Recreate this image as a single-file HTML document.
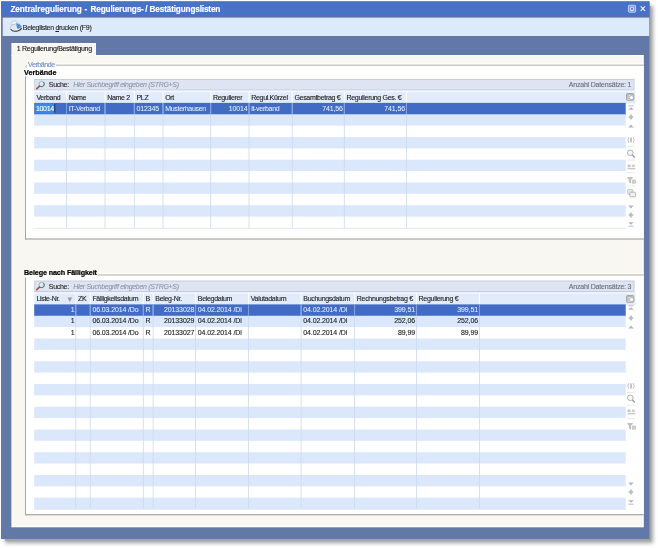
<!DOCTYPE html><html><head><meta charset="utf-8"><style>
html,body{margin:0;padding:0;background:#fff;width:658px;height:548px;overflow:hidden;position:relative}
div{position:absolute;box-sizing:border-box}
.q{left:0;top:0;width:100px;height:100px;transform-origin:0 0}
.t{font-family:"Liberation Sans",sans-serif;font-size:7px;line-height:8px;letter-spacing:-0.3px;color:#1e1e1e;white-space:nowrap;-webkit-text-stroke:0.12px currentColor}
.b{font-family:"Liberation Sans",sans-serif;font-size:7.2px;line-height:8px;font-weight:bold;color:#000;white-space:nowrap;-webkit-text-stroke:0.2px #000}
svg{position:absolute;overflow:visible}
</style></head><body><div style="left:0;top:0;width:658px;height:548px;filter:blur(0.4px)">
<div style="left:5px;top:6px;width:646px;height:535px;box-shadow:1px 1px 4px 1px rgba(0,0,0,0.38);background:#a6a6a6"></div>
<div class="q" style="transform:translate(1px,1.4px) scale(6.48500,5.37600);background:#6278a6"></div>
<div class="q" style="transform:translate(1px,1.4px) scale(6.48500,0.14400);background:#4772c6"></div>
<div class="q" style="transform:translate(1px,15.8px) scale(6.48500,0.01800);background:#5870ad"></div>
<div style="left:10.4px;top:4.9px;font-family:'Liberation Sans',sans-serif;font-weight:bold;font-size:8.2px;line-height:10px;color:#fff;white-space:nowrap;-webkit-text-stroke:0.15px #fff;letter-spacing:-0.05px">Zentralregulierung</div>
<div style="left:84.6px;top:4.9px;font-family:'Liberation Sans',sans-serif;font-weight:bold;font-size:8.2px;line-height:10px;color:#fff;white-space:nowrap;-webkit-text-stroke:0.15px #fff;">-</div>
<div style="left:90.6px;top:4.9px;font-family:'Liberation Sans',sans-serif;font-weight:bold;font-size:8.2px;line-height:10px;color:#fff;white-space:nowrap;-webkit-text-stroke:0.15px #fff;letter-spacing:-0.15px">Regulierungs-</div>
<div style="left:145.2px;top:4.9px;font-family:'Liberation Sans',sans-serif;font-weight:bold;font-size:8.2px;line-height:10px;color:#fff;white-space:nowrap;-webkit-text-stroke:0.15px #fff;">/</div>
<div style="left:149.6px;top:4.9px;font-family:'Liberation Sans',sans-serif;font-weight:bold;font-size:8.2px;line-height:10px;color:#fff;white-space:nowrap;-webkit-text-stroke:0.15px #fff;letter-spacing:-0.15px">Bestätigungslisten</div>
<svg style="left:0;top:0" width="658" height="20">
<rect x="628.4" y="5.3" width="7.2" height="6.9" rx="0.8" fill="#7f9cdc" stroke="#c8d5f3" stroke-width="0.9"/>
<rect x="630.3" y="7.2" width="3.4" height="3.2" rx="1.3" fill="#6a8ad0" stroke="#e8eefa" stroke-width="0.9"/>
<path d="M630.6 10.6 H633.4" stroke="#dfe7f8" stroke-width="0.8"/>
<path d="M640.7 6.3 L645.0 10.9 M645.0 6.3 L640.7 10.9" stroke="#eef3fc" stroke-width="1.15"/>
</svg>
<div class="q" style="transform:translate(2.7px,17.6px) scale(6.46500,0.18400);background:#dcebfc"></div>
<svg style="left:0;top:0" width="40" height="40">
<path d="M10.2 28.6 C10.6 25.6 13 23.6 16.5 23.4 C19 23.3 21 24.6 21.6 27.4 C21.8 29.2 19 30.8 15.6 31.4 C12.8 31.8 10.4 30.6 10.2 28.6 Z" fill="#e4e8ec" stroke="#a9b1ba" stroke-width="0.6"/>
<path d="M11.2 24.6 C11.2 22.4 12.2 21.2 13.6 21.1 L15.8 21.1 C16.6 21.2 16.9 22.4 16.8 23.6 L11.6 24.8 Z" fill="#f2f7fb" stroke="#9fb0c0" stroke-width="0.6"/>
<path d="M16.2 23.5 C18.4 23.6 20.4 24.4 21.2 26.6 C21.3 27.8 19.6 28.6 17.4 28.8 C16.6 27 16.2 25.2 16.2 23.5 Z" fill="#4b8fdb"/>
<path d="M10.8 29.2 C12.2 31.2 15 31.6 17.6 31 C19.6 30.4 21.2 29.4 21.6 28" fill="none" stroke="#3f3f3f" stroke-width="1.1"/>
</svg>
<div class="t" style="left:22.8px;top:23.8px;">Beleglisten <u style="text-decoration-thickness:0.5px">d</u>rucken (F9)</div>
<div class="q" style="transform:translate(11.4px,43px) scale(0.84600,0.13000);background:#fff"></div>
<div class="q" style="transform:translate(12.4px,44px) scale(0.82600,0.12000);background:#f8f7f2"></div>
<div class="t" style="left:16.8px;top:45.3px;color:#161616">1 Regulierung/Bestätigung</div>
<div class="q" style="transform:translate(11.4px,55.0px) scale(6.32400,4.72300);background:#fff"></div>
<div class="q" style="transform:translate(12.4px,56.0px) scale(6.29900,4.69800);background:#f8f7f2"></div>
<div class="q" style="transform:translate(12.4px,54.0px) scale(0.82600,0.02500);background:#f8f7f2"></div>
<div class="q" style="transform:translate(25.5px,65.2px) scale(6.18300,1.73800);background:#fff"></div>
<div class="q" style="transform:translate(56px,63.0px) scale(5.87800,0.01300);background:#fdfdf8"></div>
<div class="q" style="transform:translate(56px,64.7px) scale(5.87800,0.01000);background:#b2afa8"></div>
<div class="q" style="transform:translate(25.0px,76.3px) scale(0.01000,1.63300);background:#aaa69f"></div>
<div class="q" style="transform:translate(25.0px,238.4px) scale(6.18800,0.01200);background:#aca79f"></div>
<div class="t" style="left:28px;top:60.6px;color:#6f88c6;letter-spacing:-0.4px;-webkit-text-stroke:0.1px #6f88c6">Verbände</div>
<svg style="left:0;top:0" width="40" height="80"><path d="M26 68 V65.6 H27.2" fill="none" stroke="#a0a0a0" stroke-width="0.6"/></svg>
<div class="b" style="left:24.1px;top:68.5px;">Verbände</div>
<div class="q" style="transform:translate(25.5px,275.0px) scale(6.18300,2.39700);background:#fff"></div>
<div class="q" style="transform:translate(97.5px,272.8px) scale(5.46300,0.01300);background:#fdfdf8"></div>
<div class="q" style="transform:translate(97.5px,274.5px) scale(5.46300,0.01000);background:#b2afa8"></div>
<div class="q" style="transform:translate(25.0px,277.5px) scale(0.01000,2.37800);background:#aaa69f"></div>
<div class="q" style="transform:translate(25.0px,514.1px) scale(6.18800,0.01200);background:#aca79f"></div>
<div class="b" style="left:24.0px;top:269.3px;letter-spacing:-0.12px">Belege nach Fälligkeit</div>
<div class="q" style="transform:translate(34.2px,79.0px) scale(6.00400,0.11500);background:#c4cde2"></div>
<div class="q" style="transform:translate(35.2px,80.0px) scale(5.98400,0.09500);background:#dfe4f2"></div>
<svg style="left:35.3px;top:80.8px" width="12" height="10">
<circle cx="6.7" cy="3.0" r="2.7" fill="#d2f0f6" stroke="#8fa8ac" stroke-width="0.8"/>
<path d="M8.6 1.2 A2.7 2.7 0 0 1 5.2 5.3" fill="none" stroke="#55625f" stroke-width="0.9"/>
<path d="M4.4 5.2 L1.8 7.6" stroke="#93503e" stroke-width="1.7" stroke-linecap="round"/>
<path d="M3.2 5.6 L1.2 7.0" stroke="#f0c890" stroke-width="0.6" stroke-linecap="round" opacity="0.6"/>
</svg>
<div class="t" style="left:48.8px;top:81.0px;color:#2a2a2a">Suche:</div>
<div class="t" style="left:73.2px;top:81.0px;font-style:italic;color:#8a91a4;letter-spacing:-0.3px;-webkit-text-stroke:0.05px #8a91a4">Hier Suchbegriff eingeben (STRG+S)</div>
<div class="t" style="right:26.70px;top:81.0px;color:#6c7078;letter-spacing:-0.2px">Anzahl Datensätze: 1</div>
<div class="q" style="transform:translate(34.2px,90.5px) scale(6.01200,0.13100);background:#e1ebf9"></div>
<div class="q" style="transform:translate(34.2px,91.1px) scale(6.01200,0.01100);background:#f6f9fe"></div>
<svg style="left:626.3px;top:93.1px" width="10" height="9">
<rect x="0.5" y="0.5" width="7.2" height="6.8" rx="0.9" fill="#f2f2f2" stroke="#8e8e8e" stroke-width="0.75"/>
<path d="M0.9 0.9 H2.8 V6.9 H0.9 Z" fill="#c4c4c4"/>
<path d="M0.9 0.9 H7.3 V2.1 H0.9 Z" fill="#b8b8b8"/>
<ellipse cx="5.6" cy="4.6" rx="2.4" ry="1.9" fill="#ffffff" stroke="#7c7c7c" stroke-width="0.55"/>
</svg>
<div class="q" style="transform:translate(66.0px,91.0px) scale(0.01100,0.11900);background:#fbfdff"></div>
<div class="q" style="transform:translate(104.5px,91.0px) scale(0.01100,0.11900);background:#fbfdff"></div>
<div class="q" style="transform:translate(133.8px,91.0px) scale(0.01100,0.11900);background:#fbfdff"></div>
<div class="q" style="transform:translate(162.5px,91.0px) scale(0.01100,0.11900);background:#fbfdff"></div>
<div class="q" style="transform:translate(210.2px,91.0px) scale(0.01100,0.11900);background:#fbfdff"></div>
<div class="q" style="transform:translate(248.5px,91.0px) scale(0.01100,0.11900);background:#fbfdff"></div>
<div class="q" style="transform:translate(291.7px,91.0px) scale(0.01100,0.11900);background:#fbfdff"></div>
<div class="q" style="transform:translate(343.8px,91.0px) scale(0.01100,0.11900);background:#fbfdff"></div>
<div class="q" style="transform:translate(405.9px,91.0px) scale(0.01100,0.11900);background:#fbfdff"></div>
<div class="t" style="left:36.400000000000006px;top:93.5px;color:#222">Verband</div>
<div class="t" style="left:68.7px;top:93.5px;color:#222">Name</div>
<div class="t" style="left:107.2px;top:93.5px;color:#222">Name 2</div>
<div class="t" style="left:136.5px;top:93.5px;color:#222">PLZ</div>
<div class="t" style="left:165.2px;top:93.5px;color:#222">Ort</div>
<div class="t" style="left:212.89999999999998px;top:93.5px;color:#222">Regulierer</div>
<div class="t" style="left:251.2px;top:93.5px;color:#222">Regul.Kürzel</div>
<div class="t" style="left:294.4px;top:93.5px;color:#222">Gesamtbetrag €</div>
<div class="t" style="left:346.5px;top:93.5px;color:#222">Regulierung Ges. €</div>
<div class="t" style="left:408.59999999999997px;top:93.5px;color:#222"></div>
<div class="q" style="transform:translate(34.2px,102.9px) scale(5.91500,0.12070);background:#416bc4"></div>
<div class="q" style="transform:translate(34.2px,114.27000000000001px) scale(5.91500,0.12070);background:#dbe8fb"></div>
<div class="q" style="transform:translate(34.2px,125.64px) scale(5.91500,0.12070);background:#ffffff"></div>
<div class="q" style="transform:translate(34.2px,137.01px) scale(5.91500,0.12070);background:#dbe8fb"></div>
<div class="q" style="transform:translate(34.2px,148.38px) scale(5.91500,0.12070);background:#ffffff"></div>
<div class="q" style="transform:translate(34.2px,159.75px) scale(5.91500,0.12070);background:#dbe8fb"></div>
<div class="q" style="transform:translate(34.2px,171.12px) scale(5.91500,0.12070);background:#ffffff"></div>
<div class="q" style="transform:translate(34.2px,182.49px) scale(5.91500,0.12070);background:#dbe8fb"></div>
<div class="q" style="transform:translate(34.2px,193.86px) scale(5.91500,0.12070);background:#ffffff"></div>
<div class="q" style="transform:translate(34.2px,205.23000000000002px) scale(5.91500,0.12070);background:#dbe8fb"></div>
<div class="q" style="transform:translate(34.2px,216.6px) scale(5.91500,0.11370);background:#ffffff"></div>
<div class="q" style="transform:translate(34.2px,227.77px) scale(5.91500,0.01000);background:#e2e8f2"></div>
<div class="q" style="transform:translate(66.1px,102.9px) scale(0.00800,1.25070);background:#cbd9ef"></div>
<div class="q" style="transform:translate(66.0px,102.9px) scale(0.01000,0.11370);background:#7f9ddb"></div>
<div class="q" style="transform:translate(104.6px,102.9px) scale(0.00800,1.25070);background:#cbd9ef"></div>
<div class="q" style="transform:translate(104.5px,102.9px) scale(0.01000,0.11370);background:#7f9ddb"></div>
<div class="q" style="transform:translate(133.9px,102.9px) scale(0.00800,1.25070);background:#cbd9ef"></div>
<div class="q" style="transform:translate(133.8px,102.9px) scale(0.01000,0.11370);background:#7f9ddb"></div>
<div class="q" style="transform:translate(162.6px,102.9px) scale(0.00800,1.25070);background:#cbd9ef"></div>
<div class="q" style="transform:translate(162.5px,102.9px) scale(0.01000,0.11370);background:#7f9ddb"></div>
<div class="q" style="transform:translate(210.29999999999998px,102.9px) scale(0.00800,1.25070);background:#cbd9ef"></div>
<div class="q" style="transform:translate(210.2px,102.9px) scale(0.01000,0.11370);background:#7f9ddb"></div>
<div class="q" style="transform:translate(248.6px,102.9px) scale(0.00800,1.25070);background:#cbd9ef"></div>
<div class="q" style="transform:translate(248.5px,102.9px) scale(0.01000,0.11370);background:#7f9ddb"></div>
<div class="q" style="transform:translate(291.8px,102.9px) scale(0.00800,1.25070);background:#cbd9ef"></div>
<div class="q" style="transform:translate(291.7px,102.9px) scale(0.01000,0.11370);background:#7f9ddb"></div>
<div class="q" style="transform:translate(343.90000000000003px,102.9px) scale(0.00800,1.25070);background:#cbd9ef"></div>
<div class="q" style="transform:translate(343.8px,102.9px) scale(0.01000,0.11370);background:#7f9ddb"></div>
<div class="q" style="transform:translate(406.0px,102.9px) scale(0.00800,1.25070);background:#cbd9ef"></div>
<div class="q" style="transform:translate(405.9px,102.9px) scale(0.01000,0.11370);background:#7f9ddb"></div>
<div class="t" style="left:68.7px;top:104.5px;color:#e6eeff;-webkit-text-stroke:0.05px #e6eeff">IT-Verband</div>
<div class="t" style="left:136.5px;top:104.5px;letter-spacing:-0.12px;color:#e6eeff;-webkit-text-stroke:0.05px #e6eeff">012345</div>
<div class="t" style="left:165.2px;top:104.5px;color:#e6eeff;-webkit-text-stroke:0.05px #e6eeff">Musterhausen</div>
<div class="t" style="right:410.40px;top:104.5px;letter-spacing:-0.12px;color:#e6eeff;-webkit-text-stroke:0.05px #e6eeff">10014</div>
<div class="t" style="left:251.2px;top:104.5px;color:#e6eeff;-webkit-text-stroke:0.05px #e6eeff">it-verband</div>
<div class="t" style="right:315.10px;top:104.5px;letter-spacing:-0.12px;color:#e6eeff;-webkit-text-stroke:0.05px #e6eeff">741,56</div>
<div class="t" style="right:253.00px;top:104.5px;letter-spacing:-0.12px;color:#e6eeff;-webkit-text-stroke:0.05px #e6eeff">741,56</div>
<svg style="left:627px;top:105px" width="8" height="6"><path d="M1.4 0.8 H6.6" stroke="#b4b4b4" stroke-width="0.9"/><path d="M1.2 4.8 L4 2.2 L6.8 4.8 Z" fill="#b4b4b4"/></svg>
<svg style="left:627px;top:113px" width="8" height="8"><path d="M4 1.3 L6.4 4 L4 6.7 L1.6 4 Z" fill="#c4c4c4"/><path d="M1.4 4 H6.6 M4 1.2 V6.8" stroke="#b4b4b4" stroke-width="0.5"/></svg>
<svg style="left:627px;top:123px" width="8" height="6"><path d="M1.2 4.4 L4 1.6 L6.8 4.4 Z" fill="#b6b6b6"/></svg>
<svg style="left:627px;top:137px" width="8" height="6">
<path d="M1.8 0.2 Q-0.2 3 1.8 5.8 M6.2 0.2 Q8.2 3 6.2 5.8" fill="none" stroke="#a4a4a4" stroke-width="0.7"/>
<path d="M4 0.4 V5.6" stroke="#959595" stroke-width="1.1"/>
</svg>
<div class="q" style="transform:translate(627px,146.39999999999998px) scale(0.08000,0.00700);background:#e0e0e0"></div>
<svg style="left:626px;top:149.3px" width="11" height="10">
<circle cx="4.3" cy="3.8" r="2.8" fill="#f6f6f6" stroke="#aaaaaa" stroke-width="0.9"/>
<path d="M6.3 5.9 L8.9 8.4" stroke="#9c9c9c" stroke-width="1.4"/>
</svg>
<div class="q" style="transform:translate(627px,159.7px) scale(0.08000,0.00700);background:#e0e0e0"></div>
<svg style="left:626.5px;top:163.5px" width="10" height="7">
<rect x="0.6" y="0.6" width="3" height="2.6" fill="#c4c4c4"/><rect x="4.8" y="0.6" width="3" height="2.6" fill="#cfcfcf"/>
<path d="M0.6 4.8 H8.4" stroke="#b4b4b4" stroke-width="1.0"/>
</svg>
<div class="q" style="transform:translate(627px,172.39999999999998px) scale(0.08000,0.00700);background:#e0e0e0"></div>
<svg style="left:626.5px;top:177.2px" width="10" height="7">
<path d="M0.5 0.6 H5.6 L3.6 2.8 V6 L2.4 5.4 V2.8 Z" fill="#c8c8c8" stroke="#a4a4a4" stroke-width="0.6"/>
<rect x="5.2" y="3.0" width="3.4" height="3.2" fill="#d2d2d2" stroke="#b4b4b4" stroke-width="0.5"/>
</svg>
<div class="q" style="transform:translate(627px,185.7px) scale(0.08000,0.00700);background:#e0e0e0"></div>
<svg style="left:626.5px;top:189px" width="10" height="9">
<rect x="0.6" y="0.6" width="5.2" height="4.8" rx="0.6" fill="#e9e9e9" stroke="#b4b4b4" stroke-width="0.7"/>
<rect x="2.8" y="3.2" width="5.8" height="4.6" rx="0.8" fill="#f0f0f0" stroke="#9e9e9e" stroke-width="0.7"/>
</svg>
<svg style="left:627px;top:203.8px" width="8" height="6"><path d="M1.2 1.6 L4 4.4 L6.8 1.6 Z" fill="#b6b6b6"/></svg>
<svg style="left:627px;top:211px" width="8" height="8"><path d="M4 1.3 L6.4 4 L4 6.7 L1.6 4 Z" fill="#c4c4c4"/><path d="M1.4 4 H6.6 M4 1.2 V6.8" stroke="#b4b4b4" stroke-width="0.5"/></svg>
<svg style="left:627px;top:221.2px" width="8" height="6"><path d="M1.4 5.2 H6.6" stroke="#b4b4b4" stroke-width="0.9"/><path d="M1.2 1.2 L4 3.8 L6.8 1.2 Z" fill="#b4b4b4"/></svg>
<div class="q" style="transform:translate(35.1px,103.2px) scale(0.18900,0.10300);background:#3a88e8"></div>
<div class="t" style="left:36.0px;top:104.5px;letter-spacing:-0.12px;color:#fff;letter-spacing:-0.35px">10014</div>
<div class="q" style="transform:translate(54.3px,104.2px) scale(0.01000,0.08400);background:#2a3550"></div>
<div class="q" style="transform:translate(34.2px,280.5px) scale(6.00400,0.11500);background:#c4cde2"></div>
<div class="q" style="transform:translate(35.2px,281.5px) scale(5.98400,0.09500);background:#dfe4f2"></div>
<svg style="left:35.3px;top:282.3px" width="12" height="10">
<circle cx="6.7" cy="3.0" r="2.7" fill="#d2f0f6" stroke="#8fa8ac" stroke-width="0.8"/>
<path d="M8.6 1.2 A2.7 2.7 0 0 1 5.2 5.3" fill="none" stroke="#55625f" stroke-width="0.9"/>
<path d="M4.4 5.2 L1.8 7.6" stroke="#93503e" stroke-width="1.7" stroke-linecap="round"/>
<path d="M3.2 5.6 L1.2 7.0" stroke="#f0c890" stroke-width="0.6" stroke-linecap="round" opacity="0.6"/>
</svg>
<div class="t" style="left:48.8px;top:282.5px;color:#2a2a2a">Suche:</div>
<div class="t" style="left:73.2px;top:282.5px;font-style:italic;color:#8a91a4;letter-spacing:-0.3px;-webkit-text-stroke:0.05px #8a91a4">Hier Suchbegriff eingeben (STRG+S)</div>
<div class="t" style="right:26.70px;top:282.5px;color:#6c7078;letter-spacing:-0.2px">Anzahl Datensätze: 3</div>
<div class="q" style="transform:translate(34.2px,292.0px) scale(6.01200,0.13100);background:#e1ebf9"></div>
<div class="q" style="transform:translate(34.2px,292.6px) scale(6.01200,0.01100);background:#f6f9fe"></div>
<svg style="left:626.3px;top:294.6px" width="10" height="9">
<rect x="0.5" y="0.5" width="7.2" height="6.8" rx="0.9" fill="#f2f2f2" stroke="#8e8e8e" stroke-width="0.75"/>
<path d="M0.9 0.9 H2.8 V6.9 H0.9 Z" fill="#c4c4c4"/>
<path d="M0.9 0.9 H7.3 V2.1 H0.9 Z" fill="#b8b8b8"/>
<ellipse cx="5.6" cy="4.6" rx="2.4" ry="1.9" fill="#ffffff" stroke="#7c7c7c" stroke-width="0.55"/>
</svg>
<div class="q" style="transform:translate(75.3px,292.5px) scale(0.01100,0.11900);background:#fbfdff"></div>
<div class="q" style="transform:translate(89.7px,292.5px) scale(0.01100,0.11900);background:#fbfdff"></div>
<div class="q" style="transform:translate(142.8px,292.5px) scale(0.01100,0.11900);background:#fbfdff"></div>
<div class="q" style="transform:translate(152.6px,292.5px) scale(0.01100,0.11900);background:#fbfdff"></div>
<div class="q" style="transform:translate(195.1px,292.5px) scale(0.01100,0.11900);background:#fbfdff"></div>
<div class="q" style="transform:translate(248.0px,292.5px) scale(0.01100,0.11900);background:#fbfdff"></div>
<div class="q" style="transform:translate(300.6px,292.5px) scale(0.01100,0.11900);background:#fbfdff"></div>
<div class="q" style="transform:translate(354.1px,292.5px) scale(0.01100,0.11900);background:#fbfdff"></div>
<div class="q" style="transform:translate(415.9px,292.5px) scale(0.01100,0.11900);background:#fbfdff"></div>
<div class="q" style="transform:translate(478.9px,292.5px) scale(0.01100,0.11900);background:#fbfdff"></div>
<div class="t" style="left:36.400000000000006px;top:295.0px;color:#222">Liste-Nr.</div>
<div class="t" style="left:78.0px;top:295.0px;color:#222">ZK</div>
<div class="t" style="left:92.4px;top:295.0px;color:#222">Fälligkeitsdatum</div>
<div class="t" style="left:145.5px;top:295.0px;color:#222">B</div>
<div class="t" style="left:155.29999999999998px;top:295.0px;color:#222">Beleg-Nr.</div>
<div class="t" style="left:197.79999999999998px;top:295.0px;color:#222">Belegdatum</div>
<div class="t" style="left:250.7px;top:295.0px;color:#222">Valutadatum</div>
<div class="t" style="left:303.3px;top:295.0px;color:#222">Buchungsdatum</div>
<div class="t" style="left:356.8px;top:295.0px;color:#222">Rechnungsbetrag €</div>
<div class="t" style="left:418.59999999999997px;top:295.0px;color:#222">Regulierung €</div>
<div class="t" style="left:481.59999999999997px;top:295.0px;color:#222"></div>
<div class="q" style="transform:translate(34.2px,304.4px) scale(5.91500,0.12070);background:#416bc4"></div>
<div class="q" style="transform:translate(34.2px,315.77px) scale(5.91500,0.12070);background:#dbe8fb"></div>
<div class="q" style="transform:translate(34.2px,327.14px) scale(5.91500,0.12070);background:#ffffff"></div>
<div class="q" style="transform:translate(34.2px,338.51px) scale(5.91500,0.12070);background:#dbe8fb"></div>
<div class="q" style="transform:translate(34.2px,349.88px) scale(5.91500,0.12070);background:#ffffff"></div>
<div class="q" style="transform:translate(34.2px,361.25px) scale(5.91500,0.12070);background:#dbe8fb"></div>
<div class="q" style="transform:translate(34.2px,372.62px) scale(5.91500,0.12070);background:#ffffff"></div>
<div class="q" style="transform:translate(34.2px,383.98999999999995px) scale(5.91500,0.12070);background:#dbe8fb"></div>
<div class="q" style="transform:translate(34.2px,395.35999999999996px) scale(5.91500,0.12070);background:#ffffff"></div>
<div class="q" style="transform:translate(34.2px,406.72999999999996px) scale(5.91500,0.12070);background:#dbe8fb"></div>
<div class="q" style="transform:translate(34.2px,418.09999999999997px) scale(5.91500,0.12070);background:#ffffff"></div>
<div class="q" style="transform:translate(34.2px,429.46999999999997px) scale(5.91500,0.12070);background:#dbe8fb"></div>
<div class="q" style="transform:translate(34.2px,440.84px) scale(5.91500,0.12070);background:#ffffff"></div>
<div class="q" style="transform:translate(34.2px,452.21px) scale(5.91500,0.12070);background:#dbe8fb"></div>
<div class="q" style="transform:translate(34.2px,463.5799999999999px) scale(5.91500,0.12070);background:#ffffff"></div>
<div class="q" style="transform:translate(34.2px,474.94999999999993px) scale(5.91500,0.12070);background:#dbe8fb"></div>
<div class="q" style="transform:translate(34.2px,486.31999999999994px) scale(5.91500,0.12070);background:#ffffff"></div>
<div class="q" style="transform:translate(34.2px,497.68999999999994px) scale(5.91500,0.11370);background:#dbe8fb"></div>
<div class="q" style="transform:translate(34.2px,508.85999999999996px) scale(5.91500,0.01000);background:#e2e8f2"></div>
<div class="q" style="transform:translate(75.39999999999999px,304.4px) scale(0.00800,2.04660);background:#cbd9ef"></div>
<div class="q" style="transform:translate(75.3px,304.4px) scale(0.01000,0.11370);background:#7f9ddb"></div>
<div class="q" style="transform:translate(89.8px,304.4px) scale(0.00800,2.04660);background:#cbd9ef"></div>
<div class="q" style="transform:translate(89.7px,304.4px) scale(0.01000,0.11370);background:#7f9ddb"></div>
<div class="q" style="transform:translate(142.9px,304.4px) scale(0.00800,2.04660);background:#cbd9ef"></div>
<div class="q" style="transform:translate(142.8px,304.4px) scale(0.01000,0.11370);background:#7f9ddb"></div>
<div class="q" style="transform:translate(152.7px,304.4px) scale(0.00800,2.04660);background:#cbd9ef"></div>
<div class="q" style="transform:translate(152.6px,304.4px) scale(0.01000,0.11370);background:#7f9ddb"></div>
<div class="q" style="transform:translate(195.2px,304.4px) scale(0.00800,2.04660);background:#cbd9ef"></div>
<div class="q" style="transform:translate(195.1px,304.4px) scale(0.01000,0.11370);background:#7f9ddb"></div>
<div class="q" style="transform:translate(248.1px,304.4px) scale(0.00800,2.04660);background:#cbd9ef"></div>
<div class="q" style="transform:translate(248.0px,304.4px) scale(0.01000,0.11370);background:#7f9ddb"></div>
<div class="q" style="transform:translate(300.70000000000005px,304.4px) scale(0.00800,2.04660);background:#cbd9ef"></div>
<div class="q" style="transform:translate(300.6px,304.4px) scale(0.01000,0.11370);background:#7f9ddb"></div>
<div class="q" style="transform:translate(354.20000000000005px,304.4px) scale(0.00800,2.04660);background:#cbd9ef"></div>
<div class="q" style="transform:translate(354.1px,304.4px) scale(0.01000,0.11370);background:#7f9ddb"></div>
<div class="q" style="transform:translate(416.0px,304.4px) scale(0.00800,2.04660);background:#cbd9ef"></div>
<div class="q" style="transform:translate(415.9px,304.4px) scale(0.01000,0.11370);background:#7f9ddb"></div>
<div class="q" style="transform:translate(479.0px,304.4px) scale(0.00800,2.04660);background:#cbd9ef"></div>
<div class="q" style="transform:translate(478.9px,304.4px) scale(0.01000,0.11370);background:#7f9ddb"></div>
<div class="t" style="right:583.60px;top:306.0px;letter-spacing:-0.12px;color:#e6eeff;-webkit-text-stroke:0.05px #e6eeff">1</div>
<div class="t" style="left:92.4px;top:306.0px;letter-spacing:-0.12px;color:#e6eeff;-webkit-text-stroke:0.05px #e6eeff">06.03.2014 /Do</div>
<div class="t" style="left:145.5px;top:306.0px;color:#e6eeff;-webkit-text-stroke:0.05px #e6eeff">R</div>
<div class="t" style="right:463.80px;top:306.0px;letter-spacing:-0.12px;color:#e6eeff;-webkit-text-stroke:0.05px #e6eeff">20133028</div>
<div class="t" style="left:197.79999999999998px;top:306.0px;letter-spacing:-0.12px;color:#e6eeff;-webkit-text-stroke:0.05px #e6eeff">04.02.2014 /Di</div>
<div class="t" style="left:303.3px;top:306.0px;letter-spacing:-0.12px;color:#e6eeff;-webkit-text-stroke:0.05px #e6eeff">04.02.2014 /Di</div>
<div class="t" style="right:243.00px;top:306.0px;letter-spacing:-0.12px;color:#e6eeff;-webkit-text-stroke:0.05px #e6eeff">399,51</div>
<div class="t" style="right:180.00px;top:306.0px;letter-spacing:-0.12px;color:#e6eeff;-webkit-text-stroke:0.05px #e6eeff">399,51</div>
<div class="t" style="right:583.60px;top:317.37px;letter-spacing:-0.12px;color:#1e1e1e">1</div>
<div class="t" style="left:92.4px;top:317.37px;letter-spacing:-0.12px;color:#1e1e1e">06.03.2014 /Do</div>
<div class="t" style="left:145.5px;top:317.37px;color:#1e1e1e">R</div>
<div class="t" style="right:463.80px;top:317.37px;letter-spacing:-0.12px;color:#1e1e1e">20133029</div>
<div class="t" style="left:197.79999999999998px;top:317.37px;letter-spacing:-0.12px;color:#1e1e1e">04.02.2014 /Di</div>
<div class="t" style="left:303.3px;top:317.37px;letter-spacing:-0.12px;color:#1e1e1e">04.02.2014 /Di</div>
<div class="t" style="right:243.00px;top:317.37px;letter-spacing:-0.12px;color:#1e1e1e">252,06</div>
<div class="t" style="right:180.00px;top:317.37px;letter-spacing:-0.12px;color:#1e1e1e">252,06</div>
<div class="t" style="right:583.60px;top:328.74px;letter-spacing:-0.12px;color:#1e1e1e">1</div>
<div class="t" style="left:92.4px;top:328.74px;letter-spacing:-0.12px;color:#1e1e1e">06.03.2014 /Do</div>
<div class="t" style="left:145.5px;top:328.74px;color:#1e1e1e">R</div>
<div class="t" style="right:463.80px;top:328.74px;letter-spacing:-0.12px;color:#1e1e1e">20133027</div>
<div class="t" style="left:197.79999999999998px;top:328.74px;letter-spacing:-0.12px;color:#1e1e1e">04.02.2014 /Di</div>
<div class="t" style="left:303.3px;top:328.74px;letter-spacing:-0.12px;color:#1e1e1e">04.02.2014 /Di</div>
<div class="t" style="right:243.00px;top:328.74px;letter-spacing:-0.12px;color:#1e1e1e">89,99</div>
<div class="t" style="right:180.00px;top:328.74px;letter-spacing:-0.12px;color:#1e1e1e">89,99</div>
<svg style="left:627px;top:305.2px" width="8" height="6"><path d="M1.4 0.8 H6.6" stroke="#b4b4b4" stroke-width="0.9"/><path d="M1.2 4.8 L4 2.2 L6.8 4.8 Z" fill="#b4b4b4"/></svg>
<svg style="left:627px;top:314.3px" width="8" height="8"><path d="M4 1.3 L6.4 4 L4 6.7 L1.6 4 Z" fill="#c4c4c4"/><path d="M1.4 4 H6.6 M4 1.2 V6.8" stroke="#b4b4b4" stroke-width="0.5"/></svg>
<svg style="left:627px;top:324px" width="8" height="6"><path d="M1.2 4.4 L4 1.6 L6.8 4.4 Z" fill="#b6b6b6"/></svg>
<svg style="left:627px;top:383px" width="8" height="6">
<path d="M1.8 0.2 Q-0.2 3 1.8 5.8 M6.2 0.2 Q8.2 3 6.2 5.8" fill="none" stroke="#a4a4a4" stroke-width="0.7"/>
<path d="M4 0.4 V5.6" stroke="#959595" stroke-width="1.1"/>
</svg>
<div class="q" style="transform:translate(627px,392.0px) scale(0.08000,0.00700);background:#e0e0e0"></div>
<svg style="left:626px;top:394.2px" width="11" height="10">
<circle cx="4.3" cy="3.8" r="2.8" fill="#f6f6f6" stroke="#aaaaaa" stroke-width="0.9"/>
<path d="M6.3 5.9 L8.9 8.4" stroke="#9c9c9c" stroke-width="1.4"/>
</svg>
<div class="q" style="transform:translate(627px,404.7px) scale(0.08000,0.00700);background:#e0e0e0"></div>
<svg style="left:626.5px;top:409px" width="10" height="7">
<rect x="0.6" y="0.6" width="3" height="2.6" fill="#c4c4c4"/><rect x="4.8" y="0.6" width="3" height="2.6" fill="#cfcfcf"/>
<path d="M0.6 4.8 H8.4" stroke="#b4b4b4" stroke-width="1.0"/>
</svg>
<div class="q" style="transform:translate(627px,418.2px) scale(0.08000,0.00700);background:#e0e0e0"></div>
<svg style="left:626.5px;top:422.5px" width="10" height="7">
<path d="M0.5 0.6 H5.6 L3.6 2.8 V6 L2.4 5.4 V2.8 Z" fill="#c8c8c8" stroke="#a4a4a4" stroke-width="0.6"/>
<rect x="5.2" y="3.0" width="3.4" height="3.2" fill="#d2d2d2" stroke="#b4b4b4" stroke-width="0.5"/>
</svg>
<svg style="left:627px;top:480.7px" width="8" height="6"><path d="M1.2 1.6 L4 4.4 L6.8 1.6 Z" fill="#b6b6b6"/></svg>
<svg style="left:627px;top:488.3px" width="8" height="8"><path d="M4 1.3 L6.4 4 L4 6.7 L1.6 4 Z" fill="#c4c4c4"/><path d="M1.4 4 H6.6 M4 1.2 V6.8" stroke="#b4b4b4" stroke-width="0.5"/></svg>
<svg style="left:627px;top:499.4px" width="8" height="6"><path d="M1.4 5.2 H6.6" stroke="#b4b4b4" stroke-width="0.9"/><path d="M1.2 1.2 L4 3.8 L6.8 1.2 Z" fill="#b4b4b4"/></svg>
<svg style="left:67px;top:296.5px" width="8" height="6"><path d="M0.4 0.6 L5.2 0.6 L2.8 4.9 Z" fill="#9aa092"/></svg>
</div></body></html>
